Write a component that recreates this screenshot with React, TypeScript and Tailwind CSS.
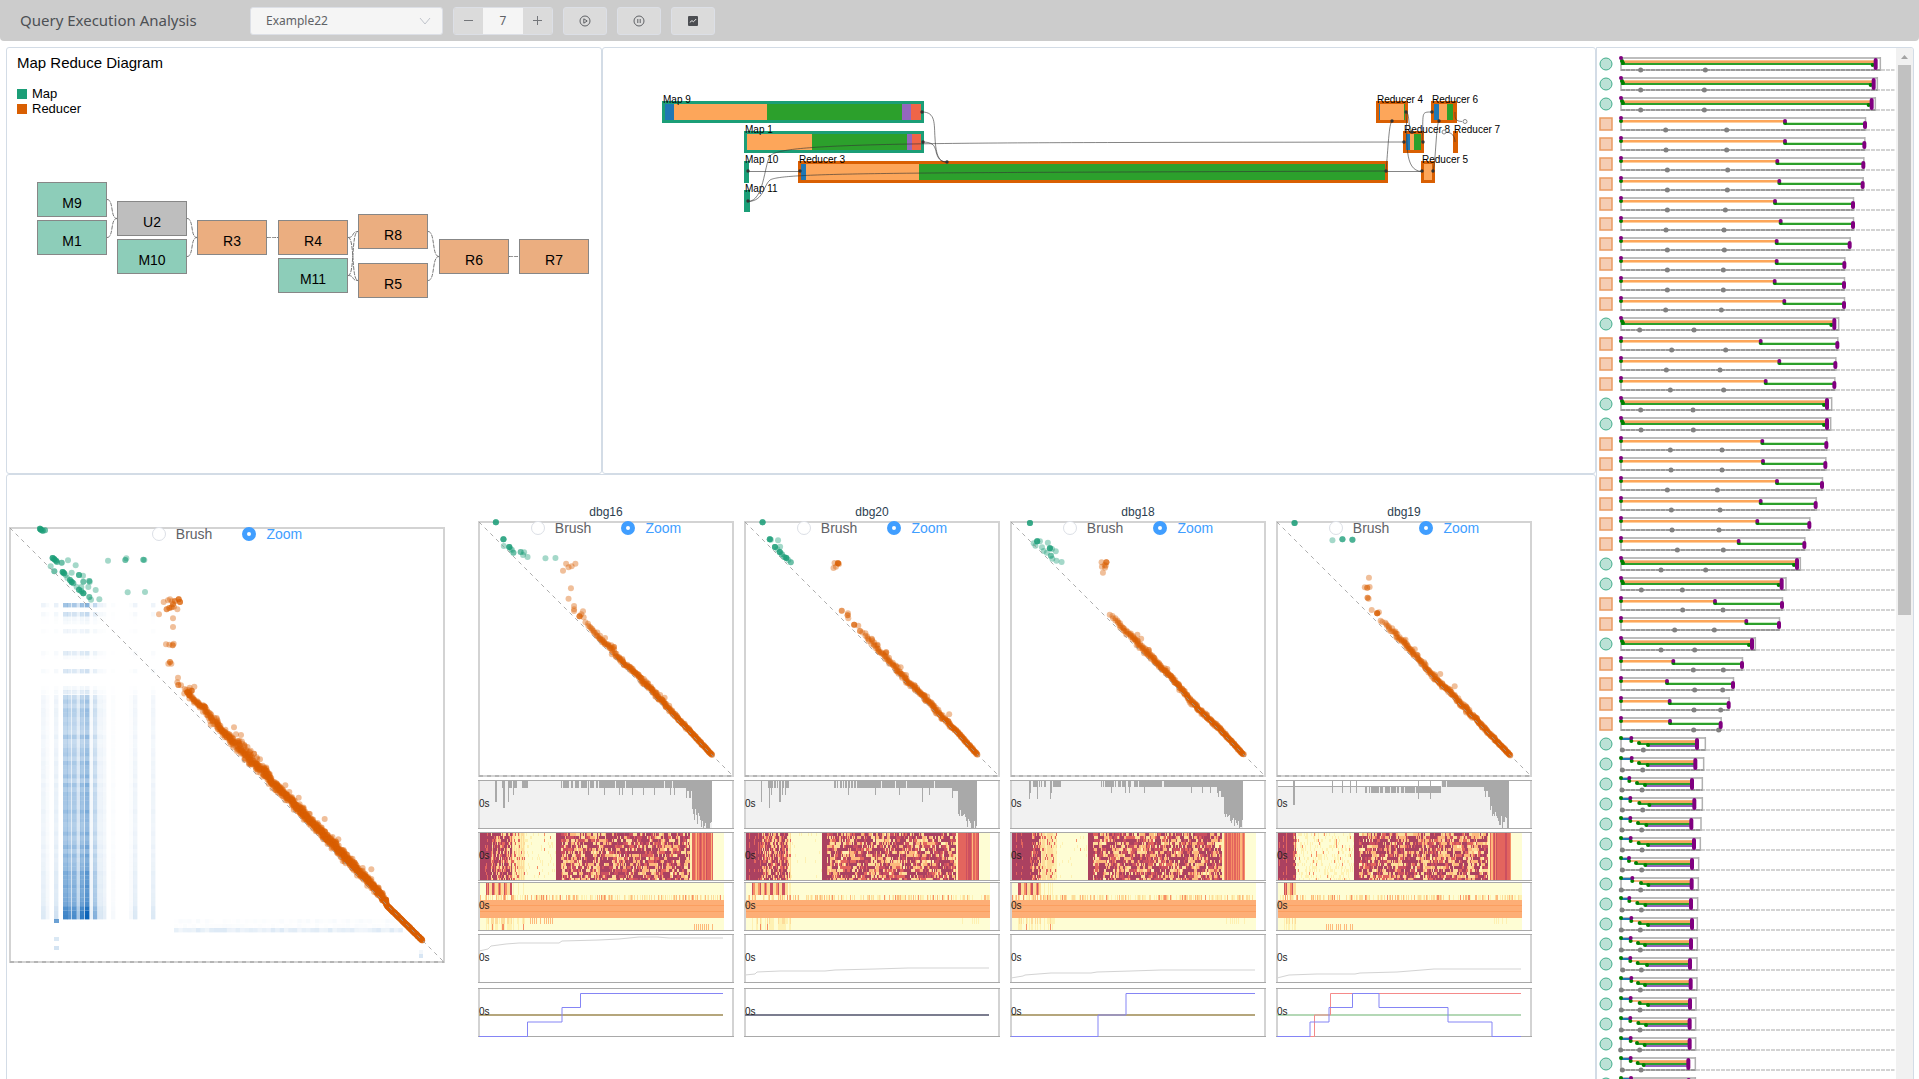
import React from "react";

/* ---------- helpers ---------- */

type Pt = [number, number];

function rng(seed: number) {
  let s = seed;
  return () => {
    s = (s * 1664525 + 1013904223) % 4294967296;
    return s / 4294967296;
  };
}

/* ---------- header ---------- */

const toolButton =
  "flex h-7 w-11 items-center justify-center rounded-[3px] border border-[#dcdfe6] bg-[#dbdbdb] text-[#606266]";

function Header() {
  return (
    <header className="flex h-[41px] items-center gap-2.5 rounded-b bg-[#cccccc] pl-5 text-[#606266]">
      <h1 className="w-[220px] pb-0.5 font-['Noto_Sans','Open_Sans',sans-serif] text-[15px] leading-5 text-[#4d5054]">
        Query Execution Analysis
      </h1>
      <div className="relative">
        <select
          aria-label="Example"
          defaultValue="Example22"
          className="h-7 w-[193px] appearance-none rounded-[3px] border border-[#dcdfe6] bg-[#f5f5f5] pl-[15px] font-['Noto_Sans','Open_Sans',sans-serif] text-xs text-[#606266]"
        >
          <option>Example22</option>
        </select>
        <svg className="pointer-events-none absolute top-2.5 right-3" width="12" height="8" fill="none" stroke="#c0c4cc">
          <path d="M1 1 L6 7 L11 1" />
        </svg>
      </div>
      <div className="flex h-7 w-[100px] overflow-hidden rounded-[3px] border border-[#dcdfe6]">
        <button aria-label="Decrease" className="flex w-[29px] items-center justify-center bg-[#dbdbdb]">
          <svg width="9" height="9" stroke="#74767a"><path d="M0 4.5h9" /></svg>
        </button>
        <input
          aria-label="Level"
          defaultValue="7"
          className="w-10 bg-[#f5f5f5] text-center font-['Noto_Sans','Open_Sans',sans-serif] text-xs"
        />
        <button aria-label="Increase" className="flex w-[29px] items-center justify-center bg-[#dbdbdb]">
          <svg width="9" height="9" stroke="#74767a"><path d="M0 4.5h9M4.5 0v9" /></svg>
        </button>
      </div>
      <button aria-label="Play" className={toolButton}>
        <svg width="12" height="12" viewBox="0 0 12 12" fill="none" stroke="currentColor">
          <circle cx="6" cy="6" r="5" />
          <path d="M4.8 3.8 L8.2 6 L4.8 8.2Z" />
        </svg>
      </button>
      <button aria-label="Pause" className={toolButton}>
        <svg width="12" height="12" viewBox="0 0 12 12" fill="none" stroke="currentColor">
          <circle cx="6" cy="6" r="5" />
          <path d="M4.8 4v4M7.2 4v4" />
        </svg>
      </button>
      <button aria-label="Chart" className={toolButton}>
        <svg width="10" height="10" viewBox="0 0 10 10" fill="none">
          <rect width="10" height="10" rx="1" fill="#4c4e52" />
          <path d="M1.8 6.4 L4 4.6 L5.4 5.8 L8.2 3" stroke="#e6e6e6" />
        </svg>
      </button>
    </header>
  );
}

/* ---------- map reduce diagram ---------- */

const KIND: Record<string, string> = { M: "#8dcdb9", U: "#bebebe", R: "#ebae80" };
const STAGES: [string, number, number][] = [
  ["M9", 37, 182], ["M1", 37, 220], ["U2", 117, 201], ["M10", 117, 239],
  ["R3", 197, 220], ["R4", 278, 220], ["M11", 278, 258], ["R8", 358, 214],
  ["R5", 358, 263], ["R6", 439, 239], ["R7", 519, 239],
];
const STAGE_LINKS = [
  ["M9", "U2"], ["M1", "U2"], ["U2", "R3"], ["M10", "R3"], ["R3", "R4"], ["R4", "R8"],
  ["R4", "R5"], ["M11", "R8"], ["M11", "R5"], ["R8", "R6"], ["R5", "R6"], ["R6", "R7"],
];

function StageDiagram() {
  const at = (id: string) => STAGES.find((s) => s[0] === id)!;
  return (
    <svg className="block" width="594" height="200" viewBox="7 140 594 200" fontFamily="Liberation Sans, Arial, sans-serif">
      {STAGE_LINKS.map(([a, b]) => {
        const x1 = at(a)[1] + 70, y1 = at(a)[2] + 17.5, x2 = at(b)[1], y2 = at(b)[2] + 17.5, m = (x1 + x2) / 2;
        return (
          <path key={a + b} fill="none" stroke="#777" strokeDasharray="4 1"
            d={`M${x1} ${y1} C${m + 2} ${y1} ${m - 2} ${y2} ${x2} ${y2}`} />
        );
      })}
      {STAGES.map(([id, x, y]) => (
        <g key={id}>
          <rect x={x + 0.5} y={y + 0.5} width="69" height="34" fill={KIND[id[0]]} stroke="#878787" />
          <text x={x + 35} y={y + 26} fontSize="14" textAnchor="middle">{id}</text>
        </g>
      ))}
    </svg>
  );
}

function DiagramPanel() {
  return (
    <section className="overflow-hidden rounded-[3px] border border-[#d3dce6] text-black">
      <h2 className="pt-[5px] pl-2.5 text-[15px] leading-5">Map Reduce Diagram</h2>
      <ul className="mt-[13px] pl-2.5 text-[13px] leading-[15px]">
        <li className="flex items-center gap-[5px]"><span className="size-2.5 bg-[#1b9e77]" />Map</li>
        <li className="flex items-center gap-[5px]"><span className="size-2.5 bg-[#d95f02]" />Reducer</li>
      </ul>
      <div className="mt-6"><StageDiagram /></div>
    </section>
  );
}

/* ---------- timeline ---------- */

const BLUE = "#1f77b4", ORANGE = "#fda65a", GREEN = "#2ca02c", PURPLE = "#9467bd", RED = "#ef6548";
const MAP = "#1b9e77", RED_STAGE = "#d95f02";

type Bar = { name: string; x: number; w: number; y: number; c: string; parts: [number, string][] };
const BARS: Bar[] = [
  { name: "Map 9", x: 662, w: 262, y: 101, c: MAP, parts: [[665, BLUE], [674, ORANGE], [767, GREEN], [902, PURPLE], [911, RED], [921, ""]] },
  { name: "Map 1", x: 744, w: 180, y: 131, c: MAP, parts: [[747, ORANGE], [812, GREEN], [907, PURPLE], [912, RED], [921, ""]] },
  { name: "Map 10", x: 744, w: 5, y: 161, c: MAP, parts: [] },
  { name: "Map 11", x: 744, w: 6, y: 190, c: MAP, parts: [] },
  { name: "Reducer 3", x: 798, w: 590, y: 161, c: RED_STAGE, parts: [[801, BLUE], [806, ORANGE], [919, GREEN], [1385, ""]] },
  { name: "Reducer 4", x: 1376, w: 32, y: 101, c: RED_STAGE, parts: [[1379, BLUE], [1380, ORANGE], [1404, GREEN], [1405, ""]] },
  { name: "Reducer 8", x: 1403, w: 21, y: 131, c: RED_STAGE, parts: [[1406, BLUE], [1410, ORANGE], [1414, GREEN], [1421, ""]] },
  { name: "Reducer 6", x: 1431, w: 26, y: 101, c: RED_STAGE, parts: [[1434, BLUE], [1439, ORANGE], [1447, GREEN], [1453, ""]] },
  { name: "Reducer 7", x: 1453, w: 5, y: 131, c: RED_STAGE, parts: [] },
  { name: "Reducer 5", x: 1421, w: 14, y: 161, c: RED_STAGE, parts: [[1424, ORANGE], [1432, ""]] },
];
const FLOWS = [
  "M922 112 C936 112 934 124 935 138 C936 156 939 162 947 162",
  "M922 142 C938 142 934 150 938 157 C940 161 943 162 947 162",
  "M748 171.500H800",
  "M748 201.500 C764 201 764 166 770 156 C778 146 850 143 1120 142.500 L1404 142",
  "M748 201.500 C764 201 763 186 770 180 C780 174 850 173 1120 172 L1385 171",
  "M1386 171.500H1422",
  "M1386 171 C1388 150 1389 122 1392 121.500",
  "M1406 112 C1410 112 1408 131 1412 132",
  "M1406 112 C1408 140 1403 171 1422 171.500",
  "M1422 142 C1424 112 1420 112 1432 112",
  "M1433 171 C1436 160 1436 124 1439 121",
  "M1455 112 C1455 119 1455 121 1462 121.500",
  "M1455 142 C1455 136 1452 133 1447 132",
];
const FLOW_DOTS: Pt[] = [
  [922, 112], [923, 142], [947, 162], [748, 171], [800, 171], [748, 201], [1404, 142], [1386, 171], [1392, 121],
  [1422, 171], [1406, 112], [1412, 132], [1423, 142], [1432, 112], [1433, 171], [1439, 121],
];

function TimelinePanel() {
  return (
    <section className="overflow-hidden rounded-[3px] border border-[#d3dce6]">
      <svg className="block" width="980" height="200" viewBox="603 48 980 200" fontFamily="Liberation Sans, Arial, sans-serif">
        {BARS.map((b) => (
          <g key={b.name}>
            <rect x={b.x} y={b.y} width={b.w} height="22" fill={b.c} />
            {b.parts.slice(0, -1).map(([x, c], i) => (
              <rect key={x} x={x} y={b.y + 3} width={b.parts[i + 1][0] - x} height="16" fill={c} />
            ))}
          </g>
        ))}
        {BARS.map((b) => (
          <text key={b.name} x={b.x + 1} y={b.y + 2} fontSize="10">{b.name}</text>
        ))}
        <g fill="none" stroke="#333" strokeOpacity="0.6">
          {FLOWS.map((d) => <path key={d} d={d} />)}
        </g>
        {FLOW_DOTS.map(([x, y]) => <circle key={`${x}-${y}`} cx={x} cy={y} r="1.700" fill="#333" />)}
        <circle cx="1465" cy="121.500" r="2" fill="#fff" stroke="#888" />
        <circle cx="1444" cy="132" r="2" fill="#fff" stroke="#888" />
      </svg>
    </section>
  );
}

/* ---------- scatter plots ---------- */

type Cloud = {
  origin: Pt; scale: Pt;
  green: [number, number, number?][];
  orange: [number, number, number?][];
  band: [number, number, number][];
  count: number; seed: number;
};

const MAIN: Cloud = {
  origin: [30, 53], scale: [3, 3], seed: 7, count: 1150,
  green: [
    [120, 55, 4], [123, 58, 4], [128, 61, 3], [135, 60, 2], [158, 143, 4], [163, 147, 4], [168, 151, 3], [171, 155, 2],
    [185, 157, 2], [204, 150], [152, 168], [163, 183, 2], [227, 165], [188, 185, 4], [192, 189, 4], [197, 194], [215, 187],
    [202, 203], [210, 209, 3], [215, 215, 4], [220, 219, 2], [237, 194, 3], [249, 196], [250, 214, 2], [268, 212, 2],
    [269, 215], [265, 230], [230, 230], [237, 238, 3], [244, 243, 2], [250, 249, 4], [244, 230], [287, 239], [268, 260, 2],
    [273, 268], [298, 267], [324, 151], [376, 149, 2], [379, 144], [430, 148, 2], [433, 149], [383, 246], [435, 245],
  ],
  orange: [
    [477, 312], [491, 275], [504, 270], [510, 267], [516, 273], [525, 272, 2], [536, 267, 3], [540, 275, 3], [519, 282, 2],
    [500, 297, 2], [508, 293, 2], [515, 291, 2], [522, 289], [532, 297], [519, 324], [519, 350], [498, 402], [508, 403],
    [521, 400], [518, 405, 2], [510, 455, 2], [505, 460], [514, 460], [534, 502], [532, 516], [535, 524, 2], [543, 525],
    [702, 651], [723, 674], [708, 672], [780, 747], [896, 862], [974, 926], [1015, 987], [1088, 1073], [1114, 1077],
    [583, 529], [569, 532], [733, 704], [856, 825], [562, 546, 4], [568, 555, 3], [575, 541, 3], [762, 730, 2], [770, 741],
    [752, 721], [806, 789], [868, 845], [927, 910], [1147, 1164, 4], [1158, 1168, 4],
  ],
  band: [
    [553, 537, 5], [568, 552, 8], [582, 570, 4], [600, 586, 6], [612, 592, 5], [640, 630, 9], [665, 660, 6], [690, 682, 8],
    [730, 722, 12], [770, 765, 9], [800, 792, 8], [830, 830, 8], [850, 846, 7], [875, 873, 7], [930, 930, 8], [980, 980, 9],
    [1040, 1045, 8], [1100, 1107, 6], [1145, 1155, 7], [1162, 1187, 1], [1267, 1290, 1],
  ],
};

const NODES: { name: string; cloud: Cloud }[] = [
  {
    name: "dbg16",
    cloud: {
      origin: [26, 66], scale: [2.904, 3], seed: 11, count: 300,
      green: [[75, 67, 4], [97, 118, 4], [98, 138], [114, 141, 4], [118, 147], [122, 150], [126, 158, 2], [147, 156, 2], [157, 157], [154, 165], [167, 171], [219, 175], [248, 174]],
      orange: [[279, 191], [306, 191], [295, 199], [286, 202], [270, 212], [293, 265], [286, 296], [302, 318], [302, 328], [302, 333], [328, 334], [323, 343], [318, 349, 3], [330, 352], [565, 593], [392, 414], [418, 441, 2], [517, 550], [552, 585]],
      band: [[337, 365, 3], [370, 407, 4], [412, 447, 5], [425, 468, 4], [480, 520, 4], [550, 594, 4], [590, 642, 3], [640, 695, 2], [703, 765, 1]],
    },
  },
  {
    name: "dbg20",
    cloud: {
      origin: [798, 66], scale: [2.904, 3], seed: 23, count: 240,
      green: [[849, 67, 4], [870, 118, 4], [873, 119], [894, 121], [900, 140], [885, 141, 4], [892, 148], [899, 156, 4], [905, 163, 2], [912, 171, 2], [918, 174, 4], [924, 180], [931, 187, 2]],
      orange: [[1058, 189], [1068, 190, 4], [1071, 192], [1062, 200], [1055, 204], [1079, 332, 2], [1097, 340], [1096, 346, 2], [1098, 355], [1115, 374, 3], [1127, 377], [1132, 393, 2], [1391, 643], [1250, 502], [1183, 434], [1208, 457, 2], [1166, 416]],
      band: [[1140, 396, 4], [1180, 440, 5], [1202, 466, 5], [1240, 510, 5], [1270, 542, 4], [1330, 602, 5], [1370, 650, 4], [1415, 697, 2], [1473, 764, 1]],
    },
  },
  {
    name: "dbg18",
    cloud: {
      origin: [32, 66], scale: [2.904, 3], seed: 31, count: 310,
      green: [[87, 69, 4], [98, 130], [103, 137], [108, 124, 4], [116, 124], [139, 128], [122, 142], [127, 153], [145, 145, 4], [151, 147], [162, 154], [136, 158], [148, 167, 2], [152, 176], [164, 182], [179, 186]],
      orange: [[295, 187], [309, 187, 3], [296, 200], [305, 203], [299, 218], [304, 195], [307, 197], [399, 404], [410, 416], [432, 450, 2], [486, 507]],
      band: [[321, 342, 2], [340, 366, 4], [370, 399, 4], [405, 432, 5], [430, 462, 4], [480, 513, 4], [515, 553, 3], [560, 609, 4], [645, 694, 2], [707, 764, 1]],
    },
  },
  {
    name: "dbg19",
    cloud: {
      origin: [804, 66], scale: [2.904, 3], seed: 47, count: 290,
      green: [[855, 69, 4], [965, 121], [994, 118, 3], [1023, 119, 3]],
      orange: [[1071, 233], [1059, 262], [1066, 263, 2], [1073, 261], [1067, 293, 2], [1070, 296], [1079, 330], [1095, 340, 4], [1100, 337], [1105, 362], [1278, 522], [1320, 559], [1177, 419], [1204, 448]],
      band: [[1112, 364, 3], [1150, 405, 4], [1200, 457, 4], [1260, 532, 4], [1310, 578, 5], [1330, 602, 5], [1380, 655, 4], [1415, 695, 2], [1482, 766, 1]],
    },
  },
];

function bandPoints(c: Cloud): Pt[] {
  const r = rng(c.seed);
  const out: Pt[] = [];
  const n = c.band.length - 1;
  const x0 = c.band[0][0], x1 = c.band[n][0];
  for (let i = 0; i < c.count; i++) {
    const x = x0 + (x1 - x0) * Math.pow(i / (c.count - 1), 0.75);
    let k = 0;
    while (k < n - 1 && c.band[k + 1][0] < x) k++;
    const [ax, ay, as] = c.band[k], [bx, by, bs] = c.band[k + 1];
    const t = (x - ax) / (bx - ax);
    const s = as + (bs - as) * t;
    const e = (r() + r() + r() - 1.5) * s;
    out.push([x + e, ay + (by - ay) * t - e]);
  }
  return out;
}

function Dots({ cloud }: { cloud: Cloud }) {
  const px = (x: number) => 1 + (x - cloud.origin[0]) / cloud.scale[0];
  const py = (y: number) => 1 + (y - cloud.origin[1]) / cloud.scale[1];
  const spread = (list: [number, number, number?][]) =>
    list.flatMap(([x, y, n = 1]) => Array.from({ length: n }, () => [x, y] as Pt));
  return (
    <g fillOpacity="0.4">
      <g fill={MAP}>
        {spread(cloud.green).map(([x, y], i) => <circle key={i} cx={px(x)} cy={py(y)} r="3" />)}
      </g>
      <g fill={RED_STAGE}>
        {[...spread(cloud.orange), ...bandPoints(cloud)].map(([x, y], i) => <circle key={i} cx={px(x)} cy={py(y)} r="3" />)}
      </g>
    </g>
  );
}

const HEAT_COLS: [number, number][] = [
  [31, 0.12], [35, 0.05], [44, 0.16], [53, 0.66], [57, 0.58], [62, 0.62], [66, 0.3], [70, 0.7], [75, 0.85], [79, 0.08],
  [83, 0.42], [88, 0.13], [92, 0.09], [101, 0.03], [119, 0.03], [123, 0.12], [141, 0.12],
];

function BlueHeat() {
  const r = rng(5);
  const rows: [number, number][] = [[75, 0.5], [84, 0.25], [88, 0.06], [92, 0.04], [101, 0.08], [123, 0.16], [127, 0.03], [141, 0.2], [158, 0.06], [162, 0.14]];
  for (let y = 167; y < 391; y += 4.4) {
    const t = (y - 167) / 224;
    const base = t < 0.7 ? 0.36 + t * 0.22 : 0.52 + (t - 0.7) * 1.3;
    rows.push([y, y > 376 ? 1.05 - r() * 0.15 : base + (r() - 0.5) * 0.18]);
  }
  return (
    <g fill="#0a63b8" transform="translate(1 1)">
      {rows.map(([y, v]) =>
        HEAT_COLS.map(([x, c]) => <rect key={`${x}-${y}`} x={x} y={y} width="4.400" height="4.400" fillOpacity={Math.min(1, v * c * 1.15)} />),
      )}
      <rect x="44" y="391" width="5" height="4" fillOpacity="0.6" />
      <rect x="44" y="409" width="5" height="4" fillOpacity="0.15" />
      <rect x="44" y="418" width="5" height="4" fillOpacity="0.18" />
      <rect x="409" y="422" width="4" height="4" fillOpacity="0.05" />
      <rect x="409" y="426" width="4" height="4" fillOpacity="0.16" />
      {Array.from({ length: 52 }, (_, i) => (
        <g key={i}>
          <rect x={164 + i * 4.4} y="400" width="4.400" height="4.400" fillOpacity={0.06 + r() * 0.08} />
          <rect x={164 + i * 4.4} y="391" width="4.400" height="4.400" fillOpacity={r() * 0.03} />
          <rect x={164 + i * 4.4} y="396" width="4.400" height="4.400" fillOpacity={r() * 0.02} />
        </g>
      ))}
    </g>
  );
}

function ModeSwitch({ group }: { group: string }) {
  const dot = "size-3.5 appearance-none rounded-full border border-[#dcdfe6] bg-white checked:border-[5px] checked:border-[#409eff]";
  return (
    <div className="absolute inset-x-0 top-0 flex h-3.5 justify-center gap-[30px] text-sm leading-[14px] text-[#606266]">
      <label className="flex items-center gap-2.5">
        <input type="radio" name={group} className={dot} />Brush
      </label>
      <label className="flex items-center gap-2.5 text-[#409eff]">
        <input type="radio" name={group} defaultChecked className={dot} />Zoom
      </label>
    </div>
  );
}

function Scatter({ cloud, size, group, heat }: { cloud: Cloud; size: number; group: string; heat?: boolean }) {
  const e = size - 1;
  return (
    <div className="relative">
      <svg className="block overflow-visible" width={size} height={size} fill="none">
        {heat && <BlueHeat />}
        <rect x="1" y="1" width={size - 2} height={size - 2} stroke="#d3d3d3" strokeWidth="2" />
        <path d={`M1 ${e}H${e}`} stroke="#b4b4b4" strokeWidth="2" strokeDasharray="4 4" />
        <Dots cloud={cloud} />
        <path d={`M1 1 L${e} ${e}`} stroke="#999" strokeOpacity="0.8" strokeDasharray="4 4" />
      </svg>
      <ModeSwitch group={group} />
    </div>
  );
}

/* ---------- per-node strips ---------- */

function Strip({ className, children }: { className: string; children: React.ReactNode }) {
  return (
    <svg className={`block ${className}`} width="256" height="49" fill="none" fontFamily="Liberation Sans, Arial, sans-serif">
      {children}
      <path d="M1 0V49M255 0V49" stroke="#d3d3d3" strokeWidth="2" />
      <path d="M0 .5H256M0 48.500H256" stroke="#a9a9a9" />
      <text x="1" y="27" fontSize="10" fill="#222">0s</text>
    </svg>
  );
}

type Activity = { end: number; dense: number; first: [number, number]; spikes: Pt[]; seed: number; step: number };
const ACTIVITY: Activity[] = [
  { seed: 3, end: 234, dense: 83, first: [23, 50], step: 7, spikes: [[17, 21], [18, 21], [25, 27], [26, 27], [30, 21], [35, 14], [110, 14], [126, 14], [141, 14], [144, 14], [154, 14], [165, 14], [176, 14], [192, 14], [196, 14]] },
  { seed: 5, end: 233, dense: 88, first: [23, 46], step: 7, spikes: [[17, 21], [25, 27], [27, 14], [35, 21], [36, 21], [38, 14], [41, 14], [104, 14], [131, 14], [155, 14], [178, 21], [185, 14]] },
  { seed: 8, end: 233, dense: 90, first: [19, 51], step: 6, spikes: [[1, 48], [19, 18], [20, 12], [27, 18], [40, 18], [41, 12], [101, 12], [115, 12], [119, 12], [134, 12], [181, 12], [192, 12], [200, 12], [207, 12]] },
  { seed: 9, end: 233, dense: 88, first: [56, 58], step: 6, spikes: [[1, 48], [17, 24], [18, 24], [56, 12], [66, 12], [74, 12], [80, 12], [142, 18], [154, 18]] },
];

function ActivityStrip({ a, late }: { a: Activity; late?: boolean }) {
  const r = rng(a.seed);
  const step = a.step;
  let d = "";
  const bar = (x: number, h: number, top = 1) => { d += `M${x} ${top}h1v${h}h-1z`; };
  for (let x = 14; x < 212; x++) {
    const top = late && x < 165 ? 7 : 1;
    const p = x >= a.first[0] && x < a.first[1] ? 0.55 : x < a.dense ? 0 : Math.min(0.97, 0.6 + (x - a.dense) / 200);
    if (r() < p) bar(x, step, top);
  }
  a.spikes.forEach(([x, h]) => bar(x, h));
  for (let x = 208; x < a.end; x++) {
    const units = 24 / step;
    const t = Math.min((x - 214) / 12, 1);
    const h = x < 214 ? 10 + Math.floor(r() * 2) * step : Math.round((units + t * 2 + r() * 2) * step);
    bar(x, Math.min(47, h));
  }
  return (
    <Strip className="mt-[3px]">
      <path d={late ? `M1 7H165V1H${a.end}V48H1Z` : `M1 1H${a.end}V48H1Z`} fill="#f1f1f1" />
      {late && <path d="M1 6.500H165" stroke="#a9a9a9" />}
      <path d={d} fill="#a9a9a9" shapeRendering="crispEdges" />
    </Strip>
  );
}

const RAMP = ["#fefdd4", "#fef1b2", "#fddc9a", "#fdb97c", "#f68f66", "#e3655e", "#cc5060", "#ab4160"];

function cellsByColor(cells: [number, number, number, number, number][]) {
  const paths = RAMP.map(() => "");
  cells.forEach(([x, y, w, h, level]) => { paths[level] += `M${x} ${y}h${w}v${h}h${-w}z`; });
  return paths.map((d, i) => d && <path key={i} d={d} fill={RAMP[i]} shapeRendering="crispEdges" />);
}

/* ends of the warm-up, mixed and cooling zones, start of the busy zone */
type Load = { warm: number; mid: number; quiet: number; busy: number; seed: number; ghost: number };
const LOAD: Load[] = [
  { warm: 13, mid: 34, quiet: 47, busy: 78, seed: 13, ghost: 0.12 },
  { warm: 17, mid: 44, quiet: 47, busy: 78, seed: 17, ghost: 0.03 },
  { warm: 20, mid: 31, quiet: 47, busy: 78, seed: 19, ghost: 0.05 },
  { warm: 17, mid: 20, quiet: 20, busy: 78, seed: 29, ghost: 0.28 },
];

function LoadStrip({ z }: { z: Load }) {
  const r = rng(z.seed);
  const cells: [number, number, number, number, number][] = [[1, 1, 245, 47, 0]];
  let prev: number[] = [];
  for (let x = 2; x < 235; x += 1) {
    const tone = r();
    const now: number[] = [];
    for (let row = 0; row < 16; row++) {
      const v = r();
      let level: number;
      if (x < z.warm) level = tone < 0.75 ? 7 : v < 0.6 ? 7 : 5;
      else if (x < z.mid) level = tone < 0.2 ? (v < 0.7 ? 7 : 5) : v < 0.4 ? 7 : v < 0.6 ? 5 : v < 0.8 ? 3 : 2;
      else if (x < z.quiet) level = v < 0.14 ? 5 : v < 0.35 ? 2 : tone < 0.35 ? 2 : 1;
      else if (x < z.busy) level = v < z.ghost * 0.1 ? 4 : v < z.ghost ? 1 : 0;
      else if (x < z.busy + 5) level = 7;
      else if (x < 212) level = tone < 0.08 ? (v < 0.5 ? 3 : 2) : v < 0.42 ? 7 : v < 0.56 ? 6 : v < 0.68 ? 5 : v < 0.84 ? 3 : v < 0.97 ? 2 : 1;
      else if (x < 214) level = 1;
      else level = tone < 0.25 ? 6 : tone < 0.75 ? 5 : tone < 0.88 ? 4 : 3;
      if (x > z.busy + 5 && x < 212 && prev.length && r() < 0.4) level = prev[row];
      now.push(level);
      cells.push([x, 1 + row * 3, 1, row === 15 ? 2 : 3, level]);
    }
    prev = now;
  }
  return <Strip className="mt-[3px]">{cellsByColor(cells)}</Strip>;
}

function DiskStrip({ z }: { z: Load }) {
  const r = rng(z.seed + 100);
  const cells: [number, number, number, number, number][] = [[1, 1, 245, 47, 0]];
  for (let x = 8; x < z.quiet; x++) {
    const v = r();
    const hot = x < z.mid;
    const s = Math.floor((x - 8) / 3);
    cells.push([x, 1, 1, 12, hot ? (s % 2 === 1 ? 2 : v < 0.5 ? 6 : 4) : v < 0.4 ? 1 : 0]);
    cells.push([x, 36, 1, 6, v < 0.2 ? 2 : v < 0.6 ? 1 : 0]);
    cells.push([x, 42, 1, 6, v < 0.06 ? 4 : v < 0.4 ? 1 : 0]);
  }
  for (let x = 2; x < 246; x++) {
    const v = r();
    cells.push([x, 13, 1, 5, v < 0.04 ? 4 : v < 0.16 ? 3 : v < 0.36 ? 2 : v < 0.6 ? 1 : 0]);
  }
  if (z.ghost > 0.1) for (let x = 50; x < 78; x += 2) if (r() < 0.7) cells.push([x, z.seed > 20 ? 42 : 36, 1, 6, 3]);
  for (let x = 216; x < 235; x += 2) if (r() < 0.7) cells.push([x, z.seed > 15 ? 36 : 42, 1, 6, z.seed === 13 ? 3 : 1]);
  return (
    <Strip className="mt-px">
      {cellsByColor(cells)}
      <rect x="1" y="18" width="245" height="18" fill="#fdae76" />
      <path d="M1 23.500H246M1 29.500H246" stroke="#fb9f60" />
    </Strip>
  );
}

const MEMORY = [
  "1,17 10,15 13,12 28,10 41,9 81,9 84,7 121,6 141,5 161,3 179,3 191,4 245,4",
  "1,41 11,40 13,38 36,37 81,37 91,36 131,35 164,34 245,34",
  "1,44 13,42 15,41 41,39 81,39 87,38 121,37 151,36 245,36",
  "1,44 13,41 41,40 79,40 84,39 121,38 146,36 158,35 245,35",
];

const STEPS: { mid: string; lines: [string, string][] }[] = [
  { mid: "#b5a67c", lines: [["M1 48.500H49.500V34H84V19.500H102.500V5.500H245", "#8585f5"]] },
  { mid: "#7b7d8f", lines: [] },
  { mid: "#b5a67c", lines: [["M1 48.500H88V27H116V5.500H245", "#8585f5"]] },
  {
    mid: "#b4d8b6",
    lines: [
      ["M1 48.500H38.500V27H54.500V5.500H245", "#f58a8a"],
      ["M1 48.500H34V34H53V19.500H76.500V5.500H103V19.500H172V34H216V48.500H245", "#8585f5"],
    ],
  },
];

function StepStrip({ i }: { i: number }) {
  return (
    <svg className="mt-[5px] block" width="256" height="49" fill="none" fontFamily="Liberation Sans, Arial, sans-serif">
      <path d="M1 0V49M255 0V49" stroke="#d3d3d3" strokeWidth="2" />
      <path d="M0 .5H256M0 48.500H256" stroke="#a9a9a9" />
      <path d="M1 27H245" stroke={STEPS[i].mid} strokeWidth="2" />
      {STEPS[i].lines.map(([d, c]) => <path key={c} d={d} stroke={c} />)}
      <text x="1" y="27" fontSize="10" fill="#222">0s</text>
    </svg>
  );
}

function NodeColumn({ i }: { i: number }) {
  const n = NODES[i];
  return (
    <article className="w-64">
      <h3 className="mb-px text-center text-xs leading-4 text-[#2c3e50]">{n.name}</h3>
      <Scatter cloud={n.cloud} size={256} group={n.name} />
      <ActivityStrip a={ACTIVITY[i]} late={i === 3} />
      <LoadStrip z={LOAD[i]} />
      <DiskStrip z={LOAD[i]} />
      <Strip className="mt-[3px]"><polyline points={MEMORY[i]} stroke="#d3d3d3" /></Strip>
      <StepStrip i={i} />
    </article>
  );
}

function AnalysisPanel() {
  return (
    <section className="flex flex-1 overflow-hidden rounded-[3px] border border-[#d3dce6] pl-0.5">
      <div className="w-[436px] shrink-0 pt-[52px]">
        <Scatter cloud={MAIN} size={436} group="overview" heat />
      </div>
      <div className="ml-[33px] flex gap-2.5 pt-[29px]">
        {NODES.map((n, i) => <NodeColumn key={n.name} i={i} />)}
      </div>
    </section>
  );
}

/* ---------- task list ---------- */

/* marks along a task are in thirds of a pixel */
type Task =
  | { k: "map"; end: number; box: number; d: Pt }
  | { k: "red"; mid: number; end: number; d: Pt }
  | { k: "full"; b: number; g: number; p: number; end: number; box: number; d: Pt };

const m = (end: number, box: number, a: number, b: number): Task => ({ k: "map", end, box, d: [a, b] });
const s = (mid: number, end: number, a: number, b: number): Task => ({ k: "red", mid, end, d: [a, b] });
const f = (b: number, g: number, p: number, end: number, box: number, a: number, c: number): Task => ({ k: "full", b, g, p, end, box, d: [a, c] });

const TASKS: Task[] = [
  m(857, 871, 152, 346), m(851, 862, 152, 343), m(845, 856, 152, 343),
  s(585, 825, 227, 410), s(585, 823, 228, 410), s(562, 820, 232, 413), s(568, 818, 232, 412), s(555, 789, 232, 406),
  s(572, 789, 228, 402), s(560, 779, 232, 403), s(560, 763, 232, 400), s(554, 762, 232, 400), s(583, 762, 227, 394),
  m(733, 746, 149, 312),
  s(512, 742, 245, 407), s(568, 736, 229, 390), s(527, 733, 241, 401),
  m(711, 725, 152, 309), m(711, 722, 153, 310),
  s(517, 709, 241, 396), s(519, 706, 243, 396), s(561, 696, 232, 382), s(512, 677, 244, 390), s(502, 658, 246, 387), s(446, 643, 262, 400),
  m(621, 631, 213, 347), m(575, 588, 154, 277),
  s(375, 576, 278, 399), s(469, 567, 254, 373),
  m(486, 496, 213, 314),
  s(250, 456, 310, 400), s(231, 429, 314, 398), s(239, 416, 312, 392), s(240, 392, 311, 386),
  f(124, 147, 174, 321, 346, 97, 160), f(125, 147, 173, 316, 341, 97, 158), f(118, 141, 165, 306, 337, 96, 156),
  f(121, 148, 178, 313, 337, 97, 158), f(121, 144, 169, 304, 333, 96, 155), f(122, 146, 174, 312, 331, 97, 156),
  f(117, 138, 166, 306, 326, 97, 155), f(127, 153, 175, 305, 325, 94, 152), f(118, 142, 166, 303, 323, 96, 154),
  f(124, 149, 174, 306, 322, 94, 151), f(122, 144, 165, 303, 322, 94, 151), f(121, 143, 171, 300, 321, 98, 154),
  f(124, 144, 165, 302, 321, 94, 151), f(122, 149, 174, 300, 318, 94, 150), f(121, 145, 168, 299, 317, 94, 150),
  f(122, 141, 164, 299, 317, 92, 149), f(122, 143, 161, 295, 316, 97, 153), f(123, 143, 161, 296, 316, 94, 151),
];

const START = 24;
const tx = (v: number) => (v - 21) / 3;

function Line({ a, b, y, c, w }: { a: number; b: number; y: number; c: string; w: number }) {
  return <path d={`M${a} ${y}H${b}`} stroke={c} strokeWidth={w} />;
}
function Dot({ x, y, c }: { x: number; y: number; c: string }) {
  return <circle cx={x} cy={y} r="2" fill={c} />;
}

function TaskRow({ t }: { t: Task }) {
  const end = tx(t.end);
  const box = t.k === "red" ? end + 0.5 : tx(t.box);
  const P = "#800080", G = "#008000";
  return (
    <svg className="block h-5 w-full overflow-visible" fill="none">
      {t.k === "red" ? (
        <rect x="3" y="4" width="12" height="12" fill="#f5cdb3" stroke="#e99a62" strokeWidth="1.500" />
      ) : (
        <circle cx="9" cy="10" r="6" fill="#bbe2d6" stroke="#43ae8d" />
      )}
      <line x1={START} x2="99.500%" y1="16" y2="16" stroke="#d3d3d3" strokeWidth="2" strokeDasharray="4 1" />
      <path d={`M${START} 4H${box}`} stroke="#bdbdbd" strokeWidth="2" />
      <path d={`M${START} 3V17M${box} 3V17`} stroke="#b0b0b0" strokeWidth="1.500" />
      <path d={`M${START} 16H${box}`} stroke="#b8b8b8" strokeWidth="2" />
      <path d={`M${START} 16H${box}`} stroke="#999" strokeWidth="2" strokeDasharray="4 1" />
      <circle cx={tx(t.d[0])} cy="16" r="2.500" fill="#808080" />
      <circle cx={tx(t.d[1])} cy="16" r="2.500" fill="#808080" />
      {t.k === "map" && (
        <>
          <Line a={START} b={end} y={7} c="#f8c493" w={2} />
          <Line a={START} b={end} y={8} c="#f3a561" w={2} />
          <Line a={START} b={end} y={10} c={GREEN} w={2} />
          <Dot x={START + 1} y={7} c={G} /><Dot x={START + 2} y={9} c={G} />
          <Dot x={START} y={4} c={P} />
          <Dot x={end - 3} y={11} c={G} />
          <path d={`M${end} 6V14`} stroke={P} strokeWidth="4" strokeLinecap="round" />
        </>
      )}
      {t.k === "red" && (
        <>
          <Line a={START} b={tx(t.mid)} y={8} c="#fdcf9f" w={2} />
          <Line a={START} b={tx(t.mid)} y={7} c={ORANGE} w={2} />
          <Line a={tx(t.mid)} b={end} y={9} c="#c7e9c0" w={2} />
          <Line a={tx(t.mid)} b={end} y={10} c={GREEN} w={2} />
          <Dot x={START} y={7} c={G} /><Dot x={START} y={4} c={P} />
          <Dot x={tx(t.mid)} y={9} c={G} /><Dot x={tx(t.mid)} y={7} c={P} />
          <path d={`M${end} 9V13`} stroke={P} strokeWidth="4" strokeLinecap="round" />
        </>
      )}
      {t.k === "full" && (
        <>
          <Line a={START} b={tx(t.b)} y={5} c={BLUE} w={2} />
          <Line a={tx(t.b)} b={end} y={7} c="#f8b57b" w={2} />
          <Line a={tx(t.g)} b={end} y={8} c="#f3a561" w={2} />
          <Line a={tx(t.p)} b={end} y={12} c={PURPLE} w={2} />
          <Line a={tx(t.g)} b={end} y={10} c={GREEN} w={2} />
          <Dot x={START} y={4} c={G} />
          <Dot x={tx(t.b)} y={7} c={G} /><Dot x={tx(t.b)} y={4} c={P} />
          <Dot x={tx(t.g)} y={9} c={G} /><Dot x={tx(t.p)} y={11} c={G} />
          <path d={`M${end} 6V14`} stroke={P} strokeWidth="4" strokeLinecap="round" />
        </>
      )}
    </svg>
  );
}

function TaskPanel() {
  return (
    <aside className="flex min-w-0 flex-1 overflow-hidden rounded-tr-[3px] border border-[#d3dce6]">
      <div className="min-w-0 flex-1 pt-1.5">
        {TASKS.map((t, i) => <TaskRow key={i} t={t} />)}
      </div>
      <div className="flex w-[17px] flex-col items-center bg-[#f1f1f1]">
        <svg className="block" width="17" height="17"><path d="M5 11 L8.500 7 L12 11Z" fill="#a3a3a3" /></svg>
        <div className="h-[550px] w-[13px] bg-[#c1c1c1]" />
      </div>
    </aside>
  );
}

export default function App() {
  return (
    <div className="h-screen overflow-hidden bg-white font-['Liberation_Sans',Arial,sans-serif]">
      <Header />
      <main className="flex h-full pt-1.5 pr-[5px] pl-1.5">
        <div className="flex w-5/6 flex-col">
          <div className="grid h-[427px] shrink-0 grid-cols-[3fr_5fr]">
            <DiagramPanel />
            <TimelinePanel />
          </div>
          <AnalysisPanel />
        </div>
        <TaskPanel />
      </main>
    </div>
  );
}
